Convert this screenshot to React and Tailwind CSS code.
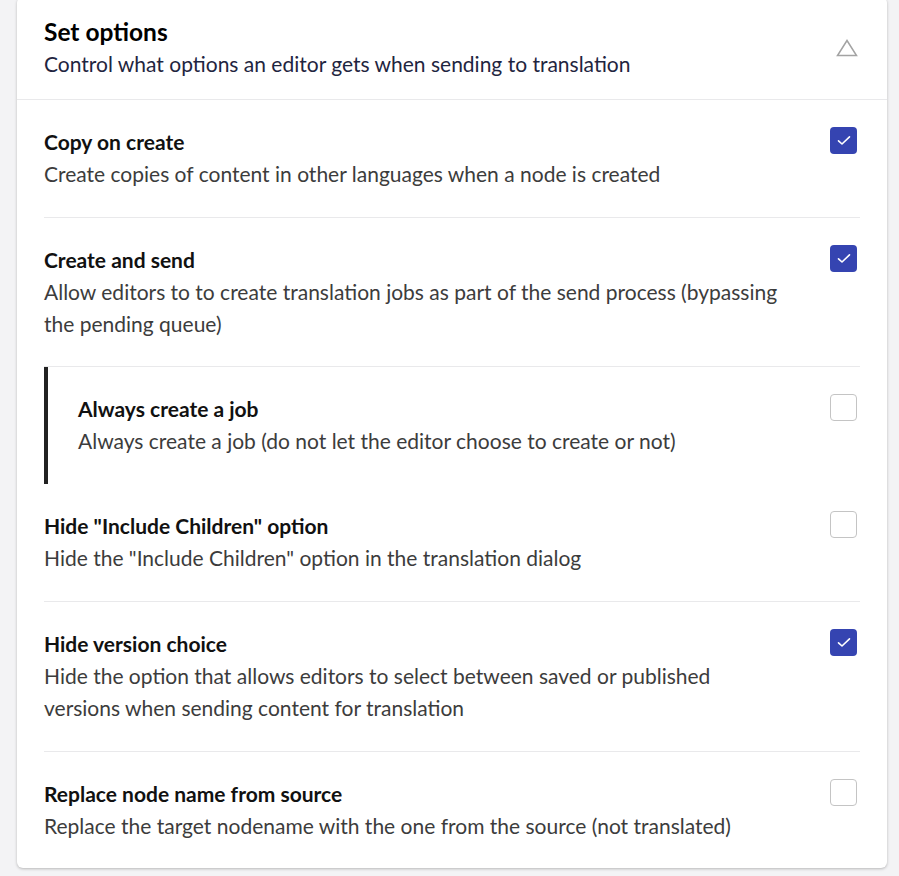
import React from "react";

const font = { fontFamily: "Lato, 'Noto Sans', sans-serif" };

function Checkbox({ checked }) {
  if (checked) {
    return (
      <div className="w-[27px] h-[27px] shrink-0 rounded-[4px] bg-[#3544b1] flex items-center justify-center mr-[3px] mt-px">
        <svg width="14" height="11" viewBox="0 0 14 11" fill="none">
          <path d="M1.5 5.8 L5 9 L12.5 1.8" stroke="white" strokeWidth="1.6" strokeLinecap="round" strokeLinejoin="round" />
        </svg>
      </div>
    );
  }
  return <div className="w-[27px] h-[27px] shrink-0 rounded-[4px] border-[1.5px] border-[#c4c4c4] bg-white mr-[3px] mt-px" />;
}

function Row({ title, desc, checked, border = true, nested = false, tight = false }) {
  const inner = (
    <div className="flex items-start justify-between gap-12">
      <div className="flex-1 min-w-0">
        <div className="text-[21px] leading-[32px] font-bold text-[#111]">{title}</div>
        <div className="text-[21px] leading-[32px] text-[#3c3c3c]">{desc}</div>
      </div>
      <Checkbox checked={checked} />
    </div>
  );
  if (nested) {
    return (
      <div className="border-l-4 border-[#222] pl-[30px] pt-[26px] pb-[27px]">{inner}</div>
    );
  }
  return (
    <div className={(tight ? "pt-[26px] pb-[26px] " : "pt-[26px] pb-[27px] ") + (border ? "border-b border-[#e9e9eb]" : "")}>{inner}</div>
  );
}

export default function App() {
  return (
    <div className="min-h-[876px] bg-[#f3f3f5] pl-[17px] pr-[12px] overflow-hidden" style={font}>
      <div className="mt-[-3px] w-[870px] bg-white rounded-[6px] shadow-[0_1px_3px_rgba(0,0,0,0.25)]">
        <div className="flex items-center justify-between px-[27px] pt-[19px] pb-[19px] border-b border-[#e9e9eb]">
          <div>
            <div className="text-[24.5px] leading-[32px] font-bold text-[#000]">Set options</div>
            <div className="text-[21px] leading-[32px] text-[#1f2540]">Control what options an editor gets when sending to translation</div>
          </div>
          <svg width="22" height="18" viewBox="0 0 22 18" className="mr-[2px]">
            <polygon points="11,1.5 20.5,16.5 1.5,16.5" fill="none" stroke="#a3a3a3" strokeWidth="1.5" strokeLinejoin="miter" />
          </svg>
        </div>
        <div className="px-[27px]">
          <Row title="Copy on create" desc="Create copies of content in other languages when a node is created" checked />
          <Row tight title="Create and send" desc="Allow editors to to create translation jobs as part of the send process (bypassing the pending queue)" checked />
          <Row nested title="Always create a job" desc="Always create a job (do not let the editor choose to create or not)" checked={false} />
          <Row title={'Hide "Include Children" option'} desc={'Hide the "Include Children" option in the translation dialog'} checked={false} />
          <Row title="Hide version choice" desc="Hide the option that allows editors to select between saved or published versions when sending content for translation" checked />
          <Row tight title="Replace node name from source" desc="Replace the target nodename with the one from the source (not translated)" checked={false} border={false} />
        </div>
      </div>
    </div>
  );
}
